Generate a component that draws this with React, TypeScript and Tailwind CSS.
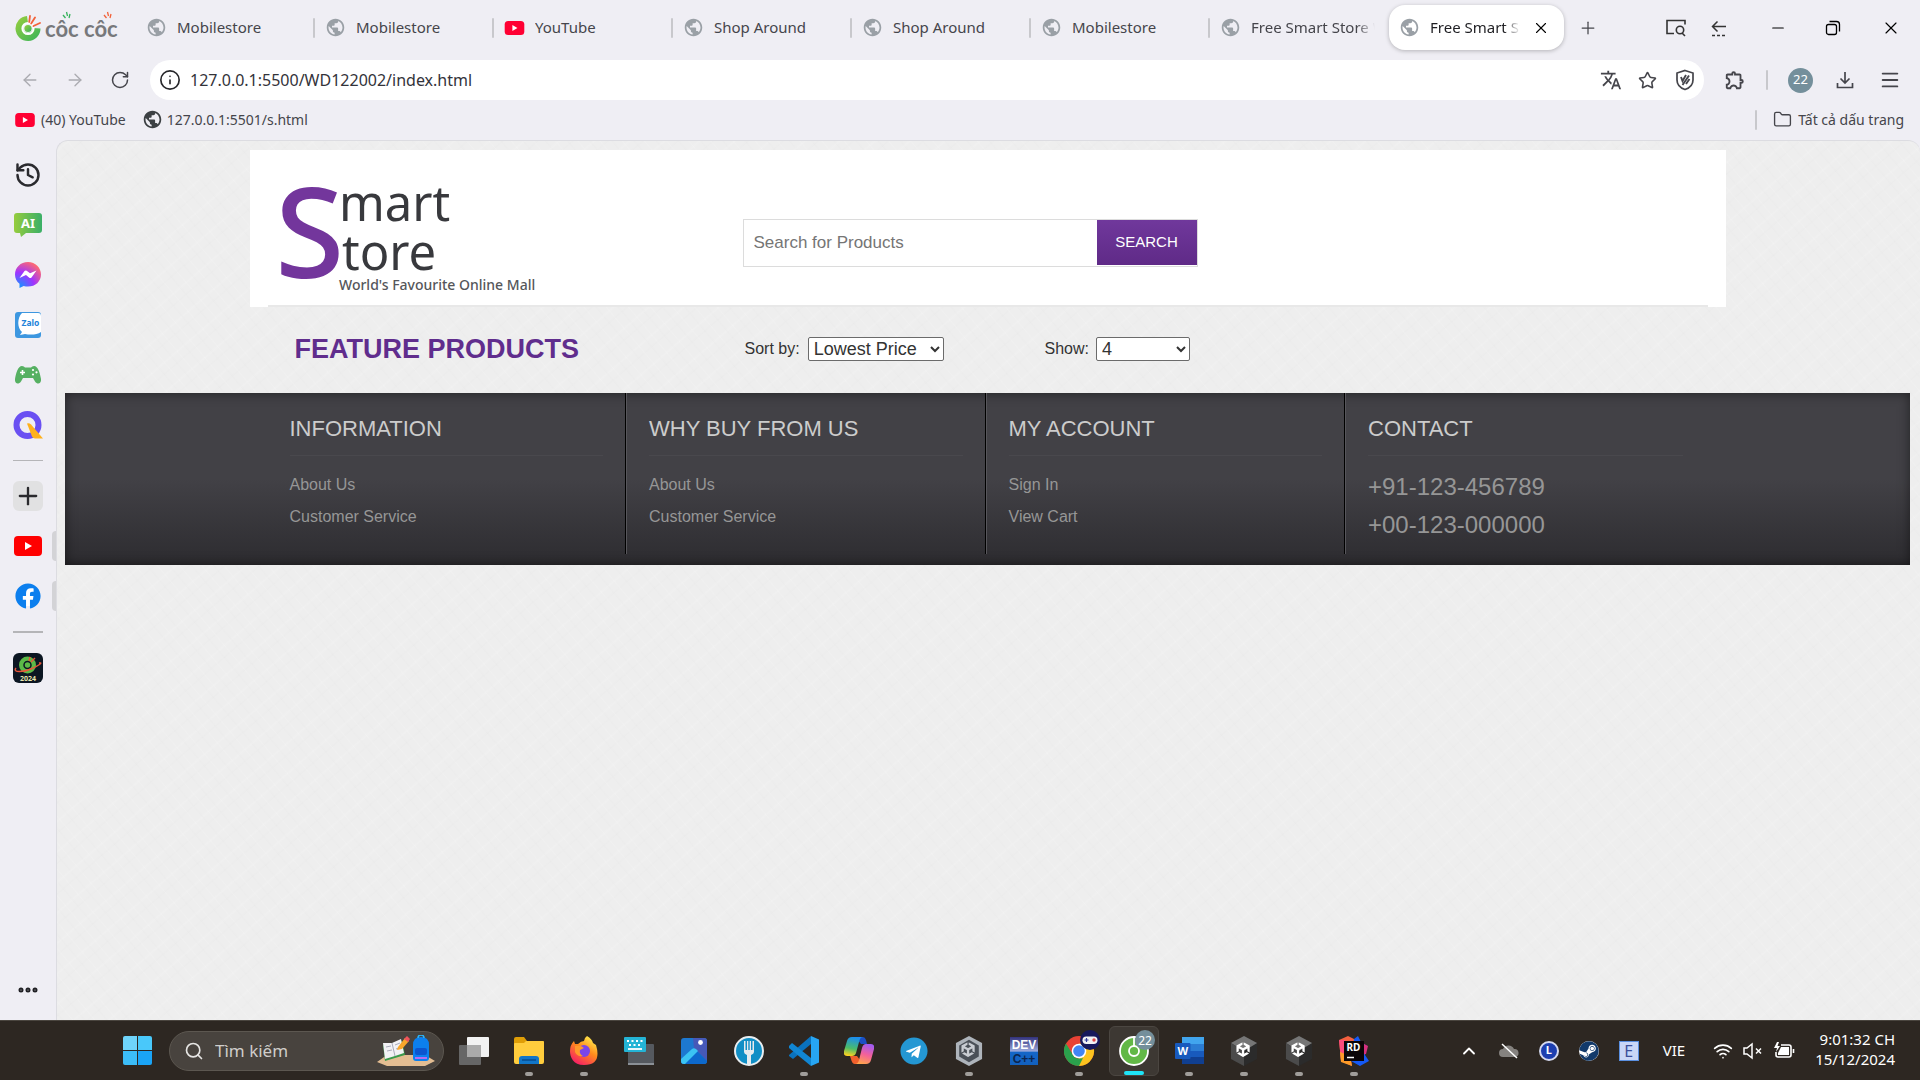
import type { ReactNode } from "react";
import { MdOutlineExtension, MdPublic, MdTranslate } from "react-icons/md";
import { FaFacebook, FaSteam, FaTelegram } from "react-icons/fa";
import { SiUnity } from "react-icons/si";
import {
  ArrowLeft,
  ArrowRight,
  ChevronUp,
  Ellipsis,
  Folder,
  History,
  Info,
  Menu,
  Minus,
  Plus,
  RotateCw,
  Search,
  Star,
  Wifi,
  X,
} from "lucide-react";

const uiFont = "font-['Noto_Sans',sans-serif]";
const pageFont = "font-['Liberation_Sans',Arial,sans-serif]";

function YouTubeIcon({ className }: { className: string }) {
  return (
    <svg viewBox="0 0 28 20" className={className} aria-hidden="true">
      <rect width="28" height="20" rx="5" fill="#f03" />
      <path d="M11 5.8v8.4l7.2-4.2z" fill="#fff" />
    </svg>
  );
}

function CocCocMark({ className }: { className: string }) {
  return (
    <svg viewBox="0 0 26 26" className={className} aria-hidden="true">
      <defs>
        <linearGradient id="cocBody" x1="0" y1="0" x2="1" y2="1">
          <stop offset="0" stopColor="#9bcf3c" />
          <stop offset="1" stopColor="#35b35b" />
        </linearGradient>
      </defs>
      <path d="M12 1A12.5 12.5 0 1 0 25.500 13.500L18 13a5 5 0 1 1-5-5z" fill="url(#cocBody)" />
      <circle cx="13" cy="13.500" r="5.600" fill="none" stroke="#fff" strokeWidth="2" />
      <circle cx="13" cy="13.500" r="3.600" fill="url(#cocBody)" />
      <path d="M15 1l-.8 6M20 2.500l-3.800 6M25 8l-6.500 3" stroke="#f2623a" strokeWidth="1.800" strokeLinecap="round" />
    </svg>
  );
}

function Brand() {
  return (
    <div className="flex w-[122px] shrink-0 items-center gap-1 pl-[15px]">
      <CocCocMark className="size-[26px] shrink-0" />
      <div className="relative pt-0.5 text-[22px] leading-6 font-bold whitespace-nowrap text-[#77787b]">
        <span className="font-['Lato',sans-serif]">côc côc</span>
        <svg viewBox="0 0 76 12" className="absolute -top-1 left-0 h-3 w-[76px]" aria-hidden="true">
          <path d="M20.500 8l-2.500-3M22.500 6l-1-4M24 8l1-4" stroke="#35b35b" strokeWidth="1.300" />
          <path d="M61.500 8L59 5M63.500 6l-1-4M65 8l1-4" stroke="#f2623a" strokeWidth="1.300" />
        </svg>
      </div>
    </div>
  );
}

type Tab = { title: string; kind: "globe" | "youtube"; fade?: boolean };
const tabs: Tab[] = [
  { title: "Mobilestore", kind: "globe" },
  { title: "Mobilestore", kind: "globe" },
  { title: "YouTube", kind: "youtube" },
  { title: "Shop Around", kind: "globe" },
  { title: "Shop Around", kind: "globe" },
  { title: "Mobilestore", kind: "globe" },
  { title: "Free Smart Store W", kind: "globe", fade: true },
];

function TabStrip() {
  return (
    <header className="flex h-[55px] items-center">
      <Brand />
      <div role="tablist" className="ml-3.5 flex min-w-0 items-center">
        {tabs.map((tab, i) => (
          <button
            key={i}
            role="tab"
            aria-selected="false"
            className="flex h-[45px] w-[179px] min-w-0 items-center gap-2.5 pl-2.5 text-left text-[15px] text-[#45454b]"
          >
            {tab.kind === "globe" ? (
              <MdPublic className="size-[21px] shrink-0 text-[#9aa0a6]" />
            ) : (
              <YouTubeIcon className="h-[14px] w-[21px] shrink-0" />
            )}
            <span
              className={
                tab.fade
                  ? "min-w-0 flex-1 overflow-hidden whitespace-nowrap [mask-image:linear-gradient(to_right,black_85%,transparent)]"
                  : "min-w-0 flex-1 overflow-hidden whitespace-nowrap"
              }
            >
              {tab.title}
            </span>
            {tab.fade ? <span className="w-1" /> : <span className="h-5 w-0.5 rounded bg-[#c8c8cc]" />}
          </button>
        ))}
        <div className="flex h-[45px] w-[175px] min-w-0 items-center rounded-[16px] bg-white pl-2.5 shadow-[0_1px_4px_rgba(0,0,0,0.25)]">
          <button role="tab" aria-selected="true" className="flex min-w-0 items-center gap-2.5 text-[15px] text-[#1f1f23]">
            <MdPublic className="size-[21px] shrink-0 text-[#9aa0a6]" />
            <span className="w-[90px] overflow-hidden text-left whitespace-nowrap [mask-image:linear-gradient(to_right,black_82%,transparent)]">
              Free Smart Store
            </span>
          </button>
          <button aria-label="Close tab" className="ml-3">
            <X className="size-[18px]" strokeWidth={1.5} />
          </button>
        </div>
      </div>
      <button aria-label="New tab" className="ml-3.5 shrink-0 text-[#45454b]">
        <Plus className="size-5" strokeWidth={1.5} />
      </button>
      <div className="ml-auto flex shrink-0 items-center pr-[19px] text-[#333]">
        <button aria-label="Search tabs" className="mr-[22px]">
          <svg viewBox="0 0 22 20" className="h-5 w-[22px]" fill="none" stroke="currentColor" strokeWidth="1.600">
            <path d="M9 15.500H2V2.500h18v4M20 18l-3-3" />
            <circle cx="15" cy="12" r="3.700" />
          </svg>
        </button>
        <button aria-label="Vertical tabs" className="mr-[40px]">
          <svg viewBox="0 0 20 20" className="size-5" fill="none" stroke="currentColor" strokeWidth="1.500">
            <path d="M17 8.500H3.500M8.500 3.500l-5 5 5 5" />
            <path d="M3 17.500h3M8 17.500h3M13 17.500h3" />
          </svg>
        </button>
        <button aria-label="Minimize" className="mr-[38px]">
          <Minus className="size-[18px] text-black" strokeWidth={1.6} />
        </button>
        <button aria-label="Restore" className="mr-[40px]">
          <svg viewBox="0 0 16 16" className="size-4 text-black" fill="none" stroke="currentColor" strokeWidth="1.300">
            <rect x="1.500" y="4.500" width="10" height="10" rx="2" />
            <path d="M4.500 1.500h7q3 0 3 3v7" />
          </svg>
        </button>
        <button aria-label="Close window">
          <X className="size-5 text-black" strokeWidth={1.4} />
        </button>
      </div>
    </header>
  );
}

function AddressBar() {
  return (
    <div className="flex h-[50px] items-center pr-[19px] text-[#45454b]">
      <button aria-label="Back" className="ml-5 text-[#ababb0]">
        <ArrowLeft className="size-5" strokeWidth={1.6} />
      </button>
      <button aria-label="Forward" className="ml-[25px] text-[#ababb0]">
        <ArrowRight className="size-5" strokeWidth={1.6} />
      </button>
      <button aria-label="Reload" className="ml-[25px]">
        <RotateCw className="size-5" strokeWidth={1.8} />
      </button>
      <div className="ml-5 flex h-10 flex-1 items-center rounded-full bg-white pr-2 pl-[9px]">
        <Info className="size-[22px] shrink-0 text-[#26262a]" strokeWidth={1.8} />
        <input
          aria-label="Address"
          className="ml-[9px] min-w-0 flex-1 bg-transparent text-[16px] text-[#33333a] outline-none"
          defaultValue="127.0.0.1:5500/WD122002/index.html"
        />
        <button aria-label="Translate" className="mr-4">
          <MdTranslate className="size-[22px]" />
        </button>
        <button aria-label="Bookmark this page" className="mr-[17px]">
          <Star className="size-[19px]" strokeWidth={2} />
        </button>
        <button aria-label="Shield">
          <svg viewBox="0 0 22 22" className="size-[22px]" fill="none" stroke="currentColor" strokeWidth="1.700">
            <path d="M11 1.500l8 2.500v7c0 5-3.500 8-8 9.500-4.500-1.500-8-4.500-8-9.500V4z" />
            <path d="M7 8l1.500 4L12 6M8.500 16L15 6.500M12 15l3.500-5" strokeWidth="1.900" />
          </svg>
        </button>
      </div>
      <button aria-label="Extensions" className="ml-5">
        <MdOutlineExtension className="size-[22px]" />
      </button>
      <span className="ml-5 h-5 w-0.5 rounded bg-[#c8c8cc]" />
      <button
        aria-label="Profile"
        className="ml-5 flex size-[25px] items-center justify-center rounded-full bg-[#748f9b] text-[13px] text-white"
      >
        22
      </button>
      <button aria-label="Downloads" className="ml-[22px]">
        <svg viewBox="0 0 20 20" className="size-5" fill="none" stroke="currentColor" strokeWidth="1.700">
          <path d="M10 2v10.500M5.500 8.500L10 13l4.500-4.500M2.500 13v4.500h15V13" />
        </svg>
      </button>
      <button aria-label="Menu" className="ml-6">
        <Menu className="size-[22px]" strokeWidth={2} />
      </button>
    </div>
  );
}

function BookmarksBar() {
  return (
    <nav className="flex h-[35px] items-center pr-4 pb-1.5 pl-[15px] text-[14px] text-[#45454b]">
      <a href="#youtube" className="flex items-center gap-1.5">
        <YouTubeIcon className="h-[14px] w-5" />
        (40) YouTube
      </a>
      <a href="#local" className="ml-4 flex items-center gap-1">
        <MdPublic className="size-[21px] text-[#3c4043]" />
        127.0.0.1:5501/s.html
      </a>
      <a href="#bookmarks" className="ml-auto flex items-center gap-1.5">
        <span className="mr-2.5 h-5 w-0.5 rounded bg-[#c8c8cc]" />
        <Folder className="size-[19px]" strokeWidth={1.7} />
        Tất cả dấu trang
      </a>
    </nav>
  );
}

function SideItem({ label, children, marked }: { label: string; children: ReactNode; marked?: boolean }) {
  return (
    <button aria-label={label} className="relative flex h-[50px] w-full shrink-0 items-center justify-center">
      {children}
      {marked && <span className="absolute top-2.5 right-0 h-[30px] w-1 rounded-l bg-[#d3d3d6]" />}
    </button>
  );
}

function SideBar() {
  return (
    <aside className="flex w-14 shrink-0 flex-col items-center pt-2.5 pb-1">
      <SideItem label="History">
        <History className="size-7 text-[#2a2a2e]" strokeWidth={2.1} />
      </SideItem>
      <SideItem label="AI chat">
        <svg viewBox="0 0 28 24" className="h-6 w-7">
          <defs>
            <linearGradient id="aiFill">
              <stop offset="0" stopColor="#96cc3d" />
              <stop offset="1" stopColor="#3aaf68" />
            </linearGradient>
          </defs>
          <path d="M3 0h22q3 0 3 3v14q0 3-3 3H12l-5 4-1-4H3q-3 0-3-3V3q0-3 3-3z" fill="url(#aiFill)" />
          <text x="14" y="15" textAnchor="middle" fill="#fff" fontSize="13" fontWeight="700">
            AI
          </text>
        </svg>
      </SideItem>
      <SideItem label="Messenger">
        <svg viewBox="0 0 26 26" className="size-[26px]">
          <defs>
            <radialGradient id="msgFill" cx="0.15" cy="1" r="1.1">
              <stop offset="0" stopColor="#0a9bff" />
              <stop offset="0.55" stopColor="#a033ff" />
              <stop offset="1" stopColor="#ff6a70" />
            </radialGradient>
          </defs>
          <path d="M13 0C5.500 0 0 5.500 0 12.500c0 4 1.700 7 4.500 9.300V26l4.200-2c1.400.5 2.800.6 4.300.6 7.500 0 13-5.200 13-12.100S20.500 0 13 0z" fill="url(#msgFill)" />
          <path d="M4.500 16l5-7q1-1 2.200-.2l3.300 2.500L21.500 8.500l-5 7q-1 1-2.200.2L11 13z" fill="#fff" />
        </svg>
      </SideItem>
      <SideItem label="Zalo">
        <svg viewBox="0 0 26 26" className="size-[26px]">
          <rect width="26" height="26" rx="3" fill="#3d97e0" />
          <path d="M7 1h16q3 0 3 3v16c-4 3-11 3-16 2l-5 1 2-3C2 16 2 6 7 1z" fill="#fff" />
          <text x="15.500" y="14" textAnchor="middle" fill="#2383d9" fontSize="8.500" fontWeight="700">
            Zalo
          </text>
        </svg>
      </SideItem>
      <SideItem label="Games">
        <svg viewBox="0 0 26 18" className="h-[18px] w-[26px]">
          <path d="M7 0q2 0 3 1.500h6Q17 0 19 0c4 0 6 7 7 13 .5 5-3.500 6-6 2.500L18 12H8l-2 3.500C3.500 19-.5 18 0 13 1 7 3 0 7 0z" fill="#56b062" />
          <path d="M7.500 4v5M5 6.500h5" stroke="#fff" strokeWidth="1.600" />
          <g fill="#fff">
            <circle cx="18" cy="4" r="1.100" />
            <circle cx="18" cy="8.500" r="1.100" />
            <circle cx="21.500" cy="6.300" r="1.100" />
          </g>
        </svg>
      </SideItem>
      <SideItem label="Q tools">
        <svg viewBox="0 0 30 28" className="h-7 w-[30px]">
          <circle cx="14.500" cy="14" r="11" fill="none" stroke="#6a50f2" strokeWidth="6" />
          <path d="M14 12.500q2-1 4 1L30 27.500h-8q-2 0-3-2z" fill="#ffb11b" />
        </svg>
      </SideItem>
      <span className="mt-2.5 h-px w-[30px] shrink-0 bg-[#b5b5b8]" />
      <button aria-label="Add" className="mt-5 mb-2.5 flex h-[30px] w-[30px] shrink-0 items-center justify-center rounded-md bg-[#e1e1e2]">
        <Plus className="size-7 text-[#2a2a2e]" strokeWidth={2} />
      </button>
      <SideItem label="YouTube" marked>
        <svg viewBox="0 0 28 20" className="h-5 w-7">
          <rect width="28" height="20" rx="4" fill="#f00" />
          <path d="M11 6v8l7-4z" fill="#fff" />
        </svg>
      </SideItem>
      <SideItem label="Facebook" marked>
        <span className="rounded-full bg-[radial-gradient(white_55%,transparent_56%)]">
          <FaFacebook className="size-[26px] text-[#0c7fee]" />
        </span>
      </SideItem>
      <span className="mt-2.5 h-0.5 w-[30px] shrink-0 bg-[#b5b5b8]" />
      <button aria-label="Cốc Cốc 2024" className="mt-5 flex h-[30px] w-[30px] shrink-0 flex-col items-center rounded-md bg-[#0c1622] pt-0.5">
        <svg viewBox="0 0 30 28" className="h-7 w-[30px]">
          <circle cx="14.500" cy="10" r="8.500" fill="#5cb947" />
          <circle cx="14.500" cy="10" r="3.500" fill="#5cb947" stroke="#0c1622" strokeWidth="1.500" />
          <path d="M17 2l-1 4M22 3l-4 4M3 13c-4 5 8 4 15 1s13-7 8-6" stroke="#e9553a" strokeWidth="1.400" fill="none" />
          <text x="15" y="25.500" textAnchor="middle" fill="#e8e6b0" fontSize="7" fontWeight="700">
            2024
          </text>
        </svg>
      </button>
      <button aria-label="More" className="mt-auto flex h-[52px] items-center">
        <Ellipsis className="size-6 text-[#1f1f23]" strokeWidth={3} />
      </button>
    </aside>
  );
}

function StoreLogo() {
  return (
    <svg
      viewBox="0 0 262 112"
      className="h-28 w-[262px] shrink-0 overflow-visible font-['Noto_Sans',sans-serif]"
      role="img"
      aria-label="Smart Store, World's Favourite Online Mall"
    >
      <text x="-7" y="95" fill="#73369c" className="text-[126px] font-medium">
        S
      </text>
      <text x="57" y="38" fill="#38393d" className="text-[49px]">
        mart
      </text>
      <text x="60" y="87" fill="#38393d" className="text-[49px]">
        tore
      </text>
      <text x="57" y="107" fill="#55565a" className="text-[14px] font-medium">
        World's Favourite Online Mall
      </text>
    </svg>
  );
}

function StoreHeader() {
  return (
    <div className="mx-auto w-4/5 bg-white">
      <div className="mx-[18px] flex h-[157px] border-b-2 border-[#e8e8e8] pt-[33px] pl-3.5">
        <StoreLogo />
        <form className="mt-9 ml-[199px] flex h-12 w-[455px] items-start border border-[#dcdcdc]">
          <input
            type="text"
            aria-label="Search for Products"
            placeholder="Search for Products"
            className="h-[45px] min-w-0 flex-1 px-2.5 text-[17px] outline-none placeholder:text-[#757575]"
          />
          <button
            type="button"
            className="h-[45px] w-[100px] shrink-0 bg-linear-to-b from-[#70389c] to-[#5f2a87] text-[15px] text-white"
          >
            SEARCH
          </button>
        </form>
      </div>
    </div>
  );
}

function FilterRow() {
  return (
    <div className="mx-auto flex h-[86px] w-4/5 items-center pb-0.5 pl-[45px] text-[16px] text-[#333]">
      <h2 className="w-[450px] text-[27px] font-bold text-[#602d8d]">FEATURE PRODUCTS</h2>
      <div className="flex w-[300px] items-center">
        <label htmlFor="sort">Sort by:</label>
        <select id="sort" className="ml-2 h-6 w-[136px] rounded-[2px] border border-[#6b6b6b] bg-white pl-px text-[18px] leading-5">
          <option>Lowest Price</option>
          <option>Highest Price</option>
        </select>
      </div>
      <div className="flex items-center">
        <label htmlFor="show">Show:</label>
        <select id="show" className="ml-[7px] h-6 w-[94px] rounded-[2px] border border-[#6b6b6b] bg-white pl-px text-[18px] leading-5">
          <option>4</option>
          <option>8</option>
        </select>
      </div>
    </div>
  );
}

const columns = [
  { heading: "INFORMATION", links: ["About Us", "Customer Service"] },
  { heading: "WHY BUY FROM US", links: ["About Us", "Customer Service"] },
  { heading: "MY ACCOUNT", links: ["Sign In", "View Cart"] },
  { heading: "CONTACT", phones: ["+91-123-456789", "+00-123-000000"] },
];

function StoreFooter() {
  return (
    <footer className="bg-[linear-gradient(#424146,#424146_50%,#2d2c30)] pb-[11px] shadow-[inset_0_0_12px_rgba(0,0,0,0.5)]">
      <div className="mx-auto w-4/5">
        <div className="mr-[21px] ml-[17px] grid h-[161px] grid-cols-4">
          {columns.map((c, i) => (
            <div
              key={c.heading}
              className={
                i < 3
                  ? "border-r border-black pt-[18px] pr-[22px] pl-[23px] shadow-[1px_0_0_#57565b]"
                  : "pt-[18px] pr-[22px] pl-[23px]"
              }
            >
              <h3 className="h-[45px] border-b border-[#49484d] text-[22px] leading-9 text-[#ccc]">{c.heading}</h3>
              {c.links && (
                <ul className="pt-[13px] text-[16px] leading-8 text-[#969696]">
                  {c.links.map((l) => (
                    <li key={l}>
                      <a href="#store">{l}</a>
                    </li>
                  ))}
                </ul>
              )}
              {c.phones && (
                <ul className="pt-3 text-[24px] leading-[38px] text-[#969696]">
                  {c.phones.map((p) => (
                    <li key={p}>{p}</li>
                  ))}
                </ul>
              )}
            </div>
          ))}
        </div>
      </div>
    </footer>
  );
}

function UnityIcon({ dark }: { dark: boolean }) {
  return (
    <svg viewBox="0 0 30 32" className="h-[30px] w-7">
      <path d="M15 0l14 7.500v17L15 32 1 24.500v-17z" fill={dark ? "#2b2b2b" : "#aeb4bb"} />
      <path d={dark ? "M15 0l14 7.500L15 16 1 7.500z" : "M15 4l10.500 6v12L15 28 4.500 22V10z"} fill={dark ? "#767676" : "#4a5058"} />
      {dark && <path d="M1 7.500L15 16v16L1 24.500z" fill="#4b4b4b" />}
      <SiUnity x="6" y="6.500" width="18" height="19" color={dark ? "#fff" : "#c8ccd2"} />
    </svg>
  );
}

const apps: { name: string; running?: boolean; active?: boolean; icon: ReactNode }[] = [
  {
    name: "Task view",
    icon: (
      <svg viewBox="0 0 30 28" className="h-7 w-[30px]">
        <rect x="8" width="22" height="20" rx="1" fill="#f2f2f2" />
        <rect y="8" width="22" height="20" rx="1" fill="#666" />
        <rect x="8" y="8" width="14" height="12" fill="#aaa" />
      </svg>
    ),
  },
  {
    name: "File Explorer",
    running: true,
    icon: (
      <svg viewBox="0 0 30 28" className="h-7 w-[30px]">
        <path d="M0 2q0-2 2-2h8l3 4h15q2 0 2 2v4H0z" fill="#df9e07" />
        <path d="M0 7q0-1 1-1h9l2-2h17q1 0 1 1v20q0 2-2 2H2q-2 0-2-2z" fill="#ffcd3d" />
        <path d="M5 27v-5q0-3 3-3h14q3 0 3 3v5z" fill="#1276c8" />
        <path d="M8 23h14" stroke="#064d91" strokeWidth="1.500" />
      </svg>
    ),
  },
  {
    name: "Firefox",
    running: true,
    icon: (
      <svg viewBox="0 0 30 30" className="size-[30px]">
        <defs>
          <linearGradient id="foxFill" x1="0.8" y1="0" x2="0.2" y2="1">
            <stop offset="0" stopColor="#fff44f" />
            <stop offset="0.45" stopColor="#ff8a1c" />
            <stop offset="1" stopColor="#f5156c" />
          </linearGradient>
        </defs>
        <path d="M18 0q5 3 6 7l3 2q6 20-12 20C4 29 1 21 1 15q0-6 4-10l1 3 3 0q3-3 6-3 0-3 3-5z" fill="url(#foxFill)" />
        <circle cx="15" cy="15" r="6" fill="#7a45ea" />
        <path d="M6 10q6-1 9 2l-4 2q-1 4 3 6-6 1-8-4z" fill="#ff9a2b" />
      </svg>
    ),
  },
  {
    name: "Keyboard",
    icon: (
      <svg viewBox="0 0 30 28" className="h-7 w-[30px]">
        <rect x="4" y="7" width="26" height="21" rx="1" fill="#55595f" />
        <rect x="4" y="26" width="26" height="2" fill="#8b9096" />
        <rect width="22" height="15" rx="1" fill="#24b4d6" />
        <path d="M3 4h16M5 8h13" stroke="#fff" strokeWidth="2" strokeDasharray="2 2.500" />
        <path d="M4 12h14" stroke="#fff" strokeWidth="1.800" />
      </svg>
    ),
  },
  {
    name: "Photos",
    icon: (
      <svg viewBox="0 0 26 26" className="size-[26px]">
        <rect width="26" height="26" rx="3" fill="#1d78d0" />
        <path d="M12 0h11q3 0 3 3v20L13 10z" fill="#4659b8" />
        <path d="M0 23l11-11q2-2 4 0l11 11q0 3-3 3H3q-3 0-3-3z" fill="#0d69cd" />
        <path d="M0 21L11 11q3-2 6 2L4 26H3q-3 0-3-3z" fill="#3bc4f3" />
        <circle cx="19.500" cy="4.500" r="2.400" fill="#fff" />
      </svg>
    ),
  },
  {
    name: "Fork",
    icon: (
      <svg viewBox="0 0 30 30" className="size-[30px]">
        <circle cx="15" cy="15" r="14" fill="#118fc6" stroke="#e9eef1" strokeWidth="2" />
        <path d="M10 5h1.500v9h1.500V5h1.300v9h1.400V5H17v9h1.500V5H20v11q0 2-3 3v10h-4V19q-3-1-3-3z" fill="#e6ebee" />
      </svg>
    ),
  },
  {
    name: "Visual Studio Code",
    running: true,
    icon: (
      <svg viewBox="0 0 30 30" className="size-[30px]">
        <path d="M22 0v8L4 23l-4-3v-1z" fill="#0a72bd" />
        <path d="M0 10l3-3L22 22v8L0 12z" fill="#1186d3" />
        <path d="M22 0l8 3.500v23L22 30z" fill="#27a5f3" />
      </svg>
    ),
  },
  {
    name: "Copilot",
    icon: (
      <svg viewBox="0 0 30 28" className="h-7 w-[30px]">
        <defs>
          <linearGradient id="copLeft" x1="0.5" y1="0" x2="0.3" y2="1">
            <stop offset="0" stopColor="#1b8df0" />
            <stop offset="0.6" stopColor="#4bbd69" />
            <stop offset="1" stopColor="#ffd21f" />
          </linearGradient>
          <linearGradient id="copRight" x1="0.6" y1="0" x2="0.3" y2="1">
            <stop offset="0" stopColor="#a25bf0" />
            <stop offset="0.5" stopColor="#f4619a" />
            <stop offset="1" stopColor="#ffa64a" />
          </linearGradient>
        </defs>
        <path d="M11 0h8q2 0 3 3l1 4h-6z" fill="#1b4fc4" />
        <path d="M19 27h-8q-3 0-4-5l-1-3h7z" fill="#f0602c" />
        <path d="M8 0h11q-3 0-4 5l-3 11q-1 3-4 3H3q-4 0-3-5L3 4q1-4 5-4z" fill="url(#copLeft)" />
        <path d="M22 27H11q3 0 4-4l3-12q1-4 4-4h5q4 0 3 5l-3 11q-1 4-5 4z" fill="url(#copRight)" />
      </svg>
    ),
  },
  {
    name: "Telegram",
    icon: (
      <span className="rounded-full bg-[radial-gradient(white_55%,transparent_56%)]">
        <FaTelegram className="size-7 text-[#2497d3]" />
      </span>
    ),
  },
  { name: "Unity Hub", running: true, icon: <UnityIcon dark={false} /> },
  {
    name: "Dev-C++",
    icon: (
      <svg viewBox="0 0 28 28" className="size-7 font-['Liberation_Sans',sans-serif]">
        <defs>
          <linearGradient id="devFill" x1="0" y1="0" x2="0" y2="1">
            <stop offset="0" stopColor="#32327c" />
            <stop offset="0.5" stopColor="#9aa9dc" />
            <stop offset="0.55" stopColor="#1466c8" />
            <stop offset="1" stopColor="#1260bd" />
          </linearGradient>
        </defs>
        <rect width="28" height="28" fill="url(#devFill)" />
        <text x="14" y="12" textAnchor="middle" fill="#fff" fontSize="12" fontWeight="700">
          DEV
        </text>
        <text x="14" y="26" textAnchor="middle" fill="#0b2550" fontSize="12" fontWeight="700">
          C++
        </text>
      </svg>
    ),
  },
  {
    name: "Chrome",
    running: true,
    icon: (
      <svg viewBox="0 0 36 36" className="mb-1.5 ml-1.5 size-9">
        <circle cx="15" cy="21" r="15" fill="#e94235" />
        <path d="M15 21v15a15 15 0 0 0 13-22.500H15z" fill="#fcc31e" />
        <path d="M2 13.500L9 25q3 5 10 3l-4 8A15 15 0 0 1 2 13.500z" fill="#2aa14c" />
        <circle cx="15" cy="21" r="7.300" fill="#fff" />
        <circle cx="15" cy="21" r="5.800" fill="#4285f4" />
        <circle cx="26" cy="10" r="10" fill="#17185c" />
        <rect x="18.500" y="6.500" width="15" height="7.500" rx="3.700" fill="#f1f1f4" />
        <path d="M20.500 10h4M22.500 8v4" stroke="#333b9e" strokeWidth="1.200" />
        <circle cx="30" cy="10" r="1.700" fill="#e24747" />
      </svg>
    ),
  },
  {
    name: "Cốc Cốc",
    running: true,
    active: true,
    icon: (
      <svg viewBox="0 0 36 36" className="mb-1.5 ml-1.5 size-9">
        <circle cx="15" cy="21" r="14" fill="#62b846" stroke="#fff" strokeWidth="1.800" />
        <path d="M15 6v10" stroke="#fff" strokeWidth="1.800" />
        <circle cx="15" cy="21" r="5" fill="#62b846" stroke="#fff" strokeWidth="1.800" />
        <circle cx="26" cy="10" r="10" fill="#748f9b" />
        <text x="26" y="14.500" textAnchor="middle" fill="#fff" fontSize="12">
          22
        </text>
      </svg>
    ),
  },
  {
    name: "Word",
    running: true,
    icon: (
      <svg viewBox="0 0 29 27" className="h-[27px] w-[29px]">
        <rect x="7" width="22" height="7" fill="#41a5ee" />
        <rect x="7" y="7" width="22" height="7" fill="#2b7cd3" />
        <rect x="7" y="14" width="22" height="6" fill="#185abd" />
        <rect x="7" y="20" width="22" height="7" fill="#103f91" />
        <rect y="6" width="15.500" height="16" rx="1" fill="#185abd" />
        <text x="7.800" y="18" textAnchor="middle" fill="#fff" fontSize="11" fontWeight="700">
          W
        </text>
      </svg>
    ),
  },
  { name: "Unity Editor", running: true, icon: <UnityIcon dark /> },
  { name: "Unity Editor 2", running: true, icon: <UnityIcon dark /> },
  {
    name: "Rider",
    running: true,
    icon: (
      <svg viewBox="0 0 30 30" className="size-[30px]">
        <path d="M0 4L9 0l8 4-5 20 1 6-11-5z" fill="#f4603f" />
        <path d="M0 4l6 0 5 22-9-2z" fill="#fb4b7c" />
        <path d="M1 16l10 4 2 10-11-4z" fill="#fd9a28" />
        <path d="M15 3l4-3 3 6 6 4-2 9 4 6-9 5-9-5z" fill="#1459f5" />
        <path d="M21 6l8 4-2 8-6 1z" fill="#d8307f" />
        <rect x="5" y="5" width="20" height="20" fill="#0b0508" />
        <text x="14.500" y="15" textAnchor="middle" fill="#fff" fontSize="10" fontWeight="700">
          RD
        </text>
        <path d="M8 21.500h7" stroke="#fff" strokeWidth="1.500" />
      </svg>
    ),
  },
];

function Taskbar() {
  return (
    <div className="flex h-[60px] shrink-0 items-center border-t border-[#4a453f] bg-[#2d2722] pl-[123px] text-white">
      <button aria-label="Start" className="grid size-[29px] shrink-0 grid-cols-2 gap-px">
        <span className="rounded-tl-xs bg-[#6fd4fb]" />
        <span className="rounded-tr-xs bg-[#49c8fa]" />
        <span className="rounded-bl-xs bg-[#3cbdf8]" />
        <span className="rounded-br-xs bg-[#1aa4f6]" />
      </button>
      <label className="ml-[17px] flex h-10 w-[275px] shrink-0 items-center rounded-full border border-[#5c5750] bg-[#48433e] pr-2 pl-3.5">
        <Search className="size-5 shrink-0 text-[#e6e5e3]" strokeWidth={2} />
        <input
          type="text"
          aria-label="Tìm kiếm"
          placeholder="Tìm kiếm"
          className="ml-[11px] w-[150px] min-w-0 bg-transparent text-[17px] outline-none placeholder:text-[#cfcdca]"
        />
        <svg viewBox="0 0 58 32" className="ml-auto h-8 w-[58px] shrink-0" aria-hidden="true">
          <path d="M0 27l10-7h38l10 6-10 5H10z" fill="#e3bd92" />
          <path d="M6 10l19-4 3 14-20 6z" fill="#3a9b4c" />
          <path d="M6 8l9 0 9-4 3 14-9 3-10 3z" fill="#f2f2f5" />
          <path d="M15 8l3 13M9 12l5-1M10 16l5-1M18 10l5-2M19 14l5-2" stroke="#a9abbb" strokeWidth="1" />
          <path d="M21 12l7-9 4 3-7 8-5 1z" fill="#f9a72b" />
          <path d="M27 4l3-3 3 3-2 3z" fill="#f0545c" />
          <path d="M36 23V10q0-8 8-8t8 8v13q0 3-3 3H39q-3 0-3-3z" fill="#0c80ee" />
          <rect x="38" y="13" width="12" height="7" rx="2" fill="#0c55cf" />
          <path d="M38 23h12" stroke="#b76cf0" strokeWidth="2" />
          <path d="M41 3q0-3 3-3t3 3" stroke="#2bb3f5" strokeWidth="1.500" fill="none" />
        </svg>
      </label>
      <div className="ml-[5px] flex items-center gap-[5px]">
        {apps.map((app) => (
          <button
            key={app.name}
            aria-label={app.name}
            className={
              app.active
                ? "relative flex size-[50px] shrink-0 items-center justify-center rounded-md border border-[#4b4641] bg-[#3d3833]"
                : "relative flex size-[50px] shrink-0 items-center justify-center"
            }
          >
            {app.icon}
            {app.running && (
              <span
                className={
                  app.active
                    ? "absolute bottom-0 h-1 w-5 rounded-full bg-[#1fe4f7]"
                    : "absolute bottom-0 h-1 w-2 rounded-full bg-[#a09d9a]"
                }
              />
            )}
          </button>
        ))}
      </div>
      <div className="ml-auto flex shrink-0 items-center gap-5 pr-[25px]">
        <button aria-label="Show hidden icons">
          <ChevronUp className="size-5" strokeWidth={2.2} />
        </button>
        <svg viewBox="0 0 20 16" className="h-4 w-5" aria-label="OneDrive">
          <path d="M4 14a4 4 0 0 1 0-8 6 6 0 0 1 11 0 4 4 0 0 1 1 8z" fill="#85827f" />
          <path d="M3 1l15 14" stroke="#fff" strokeWidth="1.500" />
        </svg>
        <span className="flex size-5 items-center justify-center rounded-full border-2 border-[#d5daf0] bg-[#1d3fb0] text-[11px] font-bold">
          L
        </span>
        <span className="rounded-full bg-white">
          <FaSteam className="size-5 text-[#123a6b]" />
        </span>
        <span className="flex size-5 items-center justify-center border border-[#5a8fe0] bg-[#c9d6f6] text-[16px] text-[#3d4f9a]">E</span>
        <button className="ml-1 text-[15px]">VIE</button>
        <div className="ml-2 flex items-center gap-2.5">
          <Wifi className="size-5" strokeWidth={2} />
          <svg viewBox="0 0 20 18" className="h-[18px] w-5" fill="none" stroke="#fff" strokeWidth="1.500">
            <path d="M1 6v6h3l5 4V2L4 6zM13 6.500l5 5M18 6.500l-5 5" />
          </svg>
          <svg viewBox="0 0 22 18" className="h-[18px] w-[22px]" fill="none" stroke="#fff" strokeWidth="1.600">
            <path d="M8 3h8q2 0 2 2v8q0 2-2 2H5q-2 0-2-2v-3M20.500 7v4" />
            <path d="M8 5h8v8H5v-2z" fill="#fff" stroke="none" />
            <path d="M4 0L1 6h3l-1 4 4-6H4.500L6 0z" fill="#fff" stroke="none" />
          </svg>
        </div>
        <div className="pb-1 text-right text-[15px] leading-5 whitespace-nowrap">
          <div>9:01:32 CH</div>
          <div>15/12/2024</div>
        </div>
      </div>
    </div>
  );
}

export default function App() {
  return (
    <div className={`flex min-h-screen flex-col bg-[#efeef4] ${uiFont}`}>
      <TabStrip />
      <AddressBar />
      <BookmarksBar />
      <div className="flex flex-1">
        <SideBar />
        <main
          className={`min-w-0 flex-1 rounded-tl-xl rounded-tr-xl border-t border-l border-[#dcdce1] bg-[#eeeeee] bg-[repeating-linear-gradient(50deg,transparent_0_3px,rgba(0,0,0,0.008)_4px,transparent_6px_11px,rgba(255,255,255,0.12)_12px,transparent_13px_17px),repeating-linear-gradient(-41deg,transparent_0_5px,rgba(0,0,0,0.008)_6px,transparent_8px_13px,rgba(255,255,255,0.12)_15px,transparent_17px_23px)] pt-[9px] pr-2.5 pl-2 ${pageFont}`}
        >
          <StoreHeader />
          <FilterRow />
          <StoreFooter />
        </main>
      </div>
      <Taskbar />
    </div>
  );
}
